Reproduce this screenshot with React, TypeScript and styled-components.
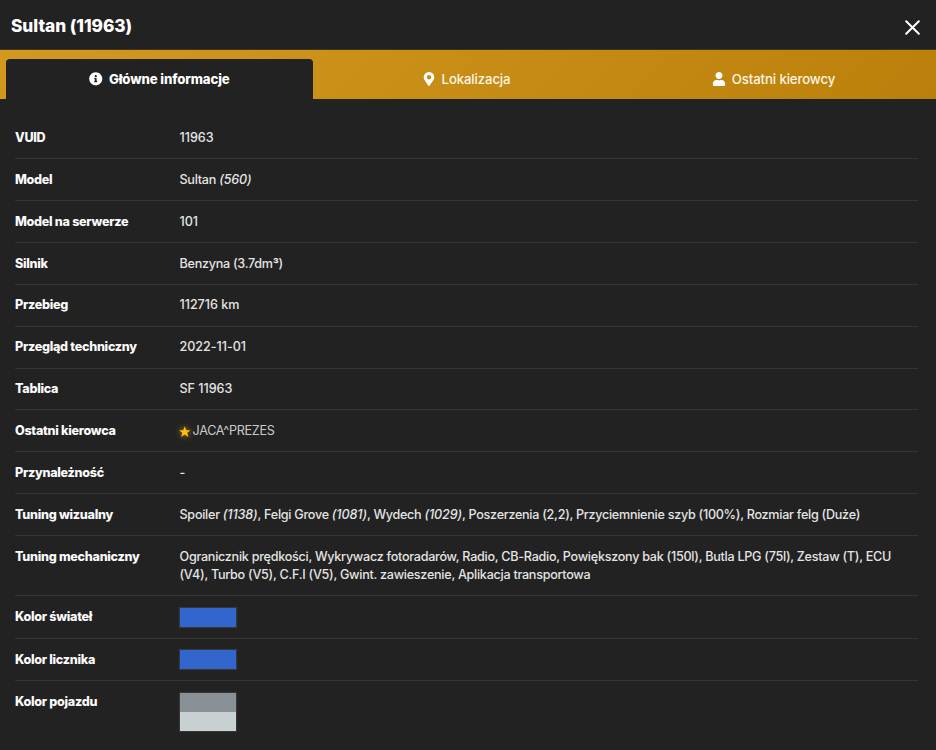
import React from "react";
import styled, { createGlobalStyle } from "styled-components";
import { FaInfoCircle, FaMapMarkerAlt, FaUser } from "react-icons/fa";

const GlobalStyle = createGlobalStyle`
  *, *::before, *::after { box-sizing: border-box; }
  body {
    margin: 0;
    background: #222;
    color: #e4e4e4;
    font-family: Inter, "Liberation Sans", sans-serif;
    font-size: 12.6px;
    overflow: hidden;
  }
`;

const Dialog = styled.section`
  display: flex;
  flex-direction: column;
  height: 750px;
  background: #222;
`;

const Header = styled.header`
  display: flex;
  align-items: center;
  justify-content: space-between;
  height: 50px;
  padding: 3px 16px 0 11px;
  border-bottom: 1px solid #3a342a;
`;

const Title = styled.h1`
  margin: 0;
  color: #fff;
  font-size: 17.3px;
  line-height: 24px;
  font-weight: 760;
  letter-spacing: -0.05px;
`;

const CloseButton = styled.button`
  display: flex;
  margin-top: 3px;
  padding: 0;
  border: 0;
  background: none;
  color: #fff;
`;

const TabBar = styled.nav`
  display: grid;
  grid-template-columns: 307px 306px 1fr;
  height: 49px;
  padding: 9px 8px 0 6px;
  background: linear-gradient(135deg, #d3991f, #bb800b);
`;

const Tab = styled.button<{ $active?: boolean }>`
  display: flex;
  align-items: center;
  justify-content: center;
  gap: 6px;
  padding: 0;
  border: 0;
  border-radius: 4px 4px 0 0;
  background: ${(p) => (p.$active ? "#222" : "transparent")};
  color: ${(p) => (p.$active ? "#fff" : "#fff6e4")};
  font: inherit;
  font-size: 13.2px;
  font-weight: ${(p) => (p.$active ? 760 : 500)};
  letter-spacing: -0.12px;

  svg { color: #fff; }
`;

const Details = styled.dl`
  margin: 0;
  padding: 18px 18px 0 15px;
`;

const Row = styled.div`
  display: grid;
  grid-template-columns: 164.5px 1fr;
  padding: 11.8px 0 11px;
  border-bottom: 1px solid #353535;
  line-height: 18.12px;

  &:last-child { border-bottom: 0; }
`;

const Label = styled.dt`
  color: #fafafa;
  font-weight: 800;
  letter-spacing: -0.29px;
`;

const Value = styled.dd<{ $numeric?: boolean }>`
  margin: 0;
  font-weight: 500;
  letter-spacing: ${(p) => (p.$numeric ? "-0.03px" : "-0.27px")};

  em { letter-spacing: -0.14px; }
`;

const Cubed = styled.span`
  position: relative;
  top: 1px;
  font-size: 13px;
  line-height: 0;
  font-weight: 650;
`;

const Driver = styled.span`
  display: flex;
  align-items: center;
  gap: 2px;
  margin-left: -0.5px;
  color: #cbcbcb;
  font-weight: 420;

  svg {
    color: #ffc107;
    filter: drop-shadow(0 0 3px #ffc107aa);
  }
`;

const Swatches = styled.div`
  width: 56px;
  margin-top: -0.5px;
  margin-bottom: 0.2px;
  box-shadow: 0 0 1px 1px #ffffff18;
`;

const Swatch = styled.div<{ $color: string }>`
  height: 19px;
  background: ${(p) => p.$color};
`;

type Detail = { label: string; value: React.ReactNode; numeric?: boolean };

const StarIcon = () => (
  <svg width="11.5" height="11.5" viewBox="0 0 22 22" fill="currentColor">
    <path d="M11 0.5 14 8H22L15.7 13 18 21 11 16.2 4 21 6.3 13 0 8H8Z" />
  </svg>
);

const rows: Detail[] = [
  { label: "VUID", value: "11963", numeric: true },
  { label: "Model", value: <>Sultan <em>(560)</em></> },
  { label: "Model na serwerze", value: "101", numeric: true },
  { label: "Silnik", value: <>Benzyna (3.7dm<Cubed>³</Cubed>)</> },
  { label: "Przebieg", value: "112716 km", numeric: true },
  { label: "Przegląd techniczny", value: "2022-11-01", numeric: true },
  { label: "Tablica", value: "SF 11963", numeric: true },
  { label: "Ostatni kierowca", value: <Driver><StarIcon />JACA^PREZES</Driver> },
  { label: "Przynależność", value: "-" },
  {
    label: "Tuning wizualny",
    value: (
      <>
        Spoiler <em>(1138)</em>, Felgi Grove <em>(1081)</em>, Wydech <em>(1029)</em>, Poszerzenia (2,2),
        Przyciemnienie szyb (100%), Rozmiar felg (Duże)
      </>
    ),
  },
  {
    label: "Tuning mechaniczny",
    value:
      "Ogranicznik prędkości, Wykrywacz fotoradarów, Radio, CB-Radio, Powiększony bak (150l), Butla LPG (75l), Zestaw (T), ECU (V4), Turbo (V5), C.F.I (V5), Gwint. zawieszenie, Aplikacja transportowa",
  },
  { label: "Kolor świateł", value: <Swatches><Swatch $color="#3366cc" /></Swatches> },
  { label: "Kolor licznika", value: <Swatches><Swatch $color="#3366cc" /></Swatches> },
  { label: "Kolor pojazdu", value: <Swatches><Swatch $color="#899196" /><Swatch $color="#c8d0d1" /></Swatches> },
];

export default function App() {
  return (
    <>
      <GlobalStyle />
      <Dialog>
        <Header>
          <Title>Sultan (11963)</Title>
          <CloseButton aria-label="Zamknij">
            <svg width="15" height="15" viewBox="0 0 15 15" fill="none" stroke="currentColor" strokeWidth="2" strokeLinecap="round">
              <path d="M1.2 1.2 13.8 13.8M13.8 1.2 1.2 13.8" />
            </svg>
          </CloseButton>
        </Header>
        <TabBar>
          <Tab $active><FaInfoCircle size={13.5} />Główne informacje</Tab>
          <Tab><FaMapMarkerAlt size={14} />Lokalizacja</Tab>
          <Tab><FaUser size={14} />Ostatni kierowcy</Tab>
        </TabBar>
        <Details>
          {rows.map((row) => (
            <Row key={row.label}>
              <Label>{row.label}</Label>
              <Value $numeric={row.numeric}>{row.value}</Value>
            </Row>
          ))}
        </Details>
      </Dialog>
    </>
  );
}
